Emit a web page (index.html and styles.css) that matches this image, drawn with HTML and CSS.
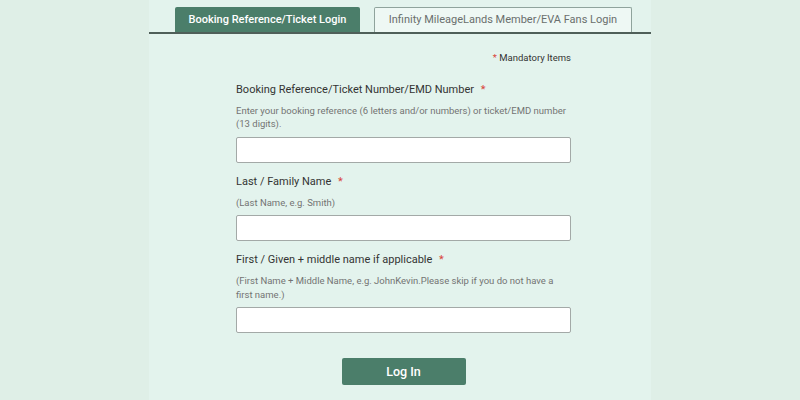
FILE: index.html
```html
<!DOCTYPE html>
<html lang="en">
<head>
    <meta charset="UTF-8">
    <meta name="viewport" content="width=device-width, initial-scale=1.0">
    <title>Login</title>
    <link rel="stylesheet" href="styles.css">
</head>
<body>
    <div class="panel">
        <!-- tabs -->
        <div class="tabs">
            <div class="tab active">Booking Reference/Ticket Login</div>
            <div class="tab">Infinity MileageLands Member/EVA Fans Login</div>
        </div>

        <form class="login-form">
            <p class="mandatory"><span class="star">*</span> Mandatory Items</p>

            <div class="field first">
                <label for="bookingRef">Booking Reference/Ticket Number/EMD Number <span class="star">*</span></label>
                <p class="help">Enter your booking reference (6 letters and/or numbers) or ticket/EMD number (13 digits).</p>
                <input type="text" id="bookingRef">
            </div>

            <div class="field">
                <label for="lastName">Last / Family Name <span class="star">*</span></label>
                <p class="help">(Last Name, e.g. Smith)</p>
                <input type="text" id="lastName">
            </div>

            <div class="field">
                <label for="firstName">First / Given + middle name if applicable <span class="star">*</span></label>
                <p class="help two">(First Name + Middle Name, e.g. JohnKevin.Please skip if you do not have a first name.)</p>
                <input type="text" id="firstName">
            </div>

            <div class="actions">
                <button type="button">Log In</button>
            </div>
        </form>
    </div>
</body>
</html>
```

FILE: styles.css
```css
/* CSS */
body {
    margin: 0;
    font-family: Roboto, "Liberation Sans", Arial, sans-serif;
    background-color: #dfefe7;
    color: #333;
}

.panel {
    width: 502px;
    height: 400px;
    margin: 0 auto;
    background: #e3f3ed;
}

.tabs {
    display: flex;
    gap: 14px;
    padding: 7px 0 0 26px;
    border-bottom: 2px solid #4f5f59;
}

.tab {
    width: 256px;
    height: 24px;
    line-height: 24px;
    text-align: center;
    font-size: 11px;
    color: #6a6f6d;
    background: #eef8f4;
    border: 1px solid #8fa39c;
    border-bottom: none;
    border-radius: 2px 2px 0 0;
    white-space: nowrap;
}

.tab.active {
    width: 185px;
    height: 25px;
    line-height: 25px;
    border: none;
    background: #4b7e6a;
    color: #fff;
    font-weight: 500;
}

.login-form {
    padding: 0 80px 0 87px;
}

.mandatory {
    margin: 17px 0 0;
    font-size: 9.5px;
    line-height: 14px;
    text-align: right;
    color: #333;
}

.star {
    color: #d9443a;
    margin-left: 4px;
}

.mandatory .star {
    margin: 0;
}

.field {
    margin-top: 11px;
}

.field.first {
    margin-top: 17px;
}

label {
    display: block;
    font-size: 11px;
    line-height: 16px;
    color: #333;
}

.help {
    margin: 6px 0 6px;
    font-size: 9.5px;
    line-height: 13px;
    color: #737373;
}

.field.first .help {
    margin-bottom: 7px;
}

.help.two {
    line-height: 14px;
    margin-bottom: 5px;
}

input {
    display: block;
    box-sizing: border-box;
    width: 100%;
    height: 26px;
    border: 1px solid #a3a9a7;
    border-radius: 2px;
    background: #fff;
}

.actions {
    display: flex;
    justify-content: center;
    margin-top: 25px;
}

button {
    width: 124px;
    height: 27px;
    border: none;
    border-radius: 2px;
    background-color: #4b7e6a;
    color: white;
    font-family: inherit;
    font-size: 12.5px;
    font-weight: 500;
    cursor: pointer;
}
```
